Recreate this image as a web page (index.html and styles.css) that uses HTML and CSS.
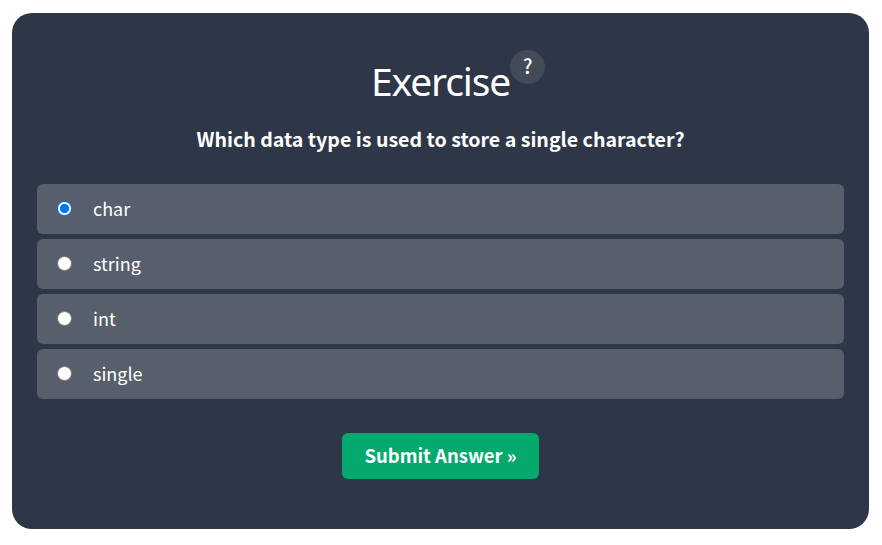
FILE: index.html
```html
<!DOCTYPE html>
<html lang="en">
<head>
<meta charset="utf-8">
<title>Exercise</title>
<link rel="stylesheet" href="styles.css">
</head>
<body>
<main class="exercise">
  <h2 class="title"><span class="title-text">Exercise</span><span class="help">?</span></h2>
  <p class="question"><span>Which data type is used to store a single character?</span></p>
  <form class="form">
    <label class="option"><input class="radio" type="radio" name="answer" checked><span>char</span></label>
    <label class="option"><input class="radio" type="radio" name="answer"><span>string</span></label>
    <label class="option"><input class="radio" type="radio" name="answer"><span>int</span></label>
    <label class="option"><input class="radio" type="radio" name="answer"><span>single</span></label>
    <button class="submit" type="button"><span>Submit Answer »</span></button>
  </form>
</main>
</body>
</html>
```
FILE: styles.css
```css
* {
  box-sizing: border-box;
}

body {
  margin: 0;
  background: #fff;
  color: #fff;
  font-family: "Noto Sans CJK SC", "Noto Sans", sans-serif;
}

.exercise {
  width: 857px;
  height: 516px;
  margin: 13px 0 0 12px;
  padding: 37px 25px 0;
  border-radius: 20px;
  background: #2e3748;
}

.title {
  display: flex;
  justify-content: center;
  align-items: flex-start;
  height: 64px;
  margin: 0;
  padding-left: 35px;
  font-weight: 400;
}

.title-text {
  padding-top: 3px;
  font: 400 39px/56px "Noto Sans", sans-serif;
  letter-spacing: -1.15px;
}

.help {
  width: 35px;
  height: 34px;
  border-radius: 50%;
  background: #434b5a;
  font-size: 20px;
  font-weight: 500;
  line-height: 32px;
  text-align: center;
}

.question {
  height: 70px;
  margin: 0;
  font-size: 19.6px;
  font-weight: 700;
  line-height: 49px;
  text-align: center;
}

.form {
  display: flex;
  flex-direction: column;
  gap: 5px;
}

.option {
  display: flex;
  align-items: center;
  height: 50px;
  padding-left: 20px;
  border-radius: 6px;
  background: #585f6c;
  font-size: 18px;
  line-height: 48px;
}

.option span {
  height: 50px;
}

.radio {
  appearance: none;
  flex: none;
  width: 15px;
  height: 15px;
  margin: 0 21px 1px 0;
  border: 1px solid #767676;
  border-radius: 50%;
  background: #fff;
}

.radio:checked {
  border-color: #0075ff;
  background: radial-gradient(circle, #0075ff 4.2px, #fff 5px);
}

.submit {
  align-self: center;
  width: 197px;
  height: 46px;
  margin-top: 29px;
  padding: 0 0 2px;
  border: 0;
  border-radius: 6px;
  background: #04aa6d;
  color: #fff;
  font: 700 18.5px/44px "Noto Sans CJK SC", "Noto Sans", sans-serif;
}
```
